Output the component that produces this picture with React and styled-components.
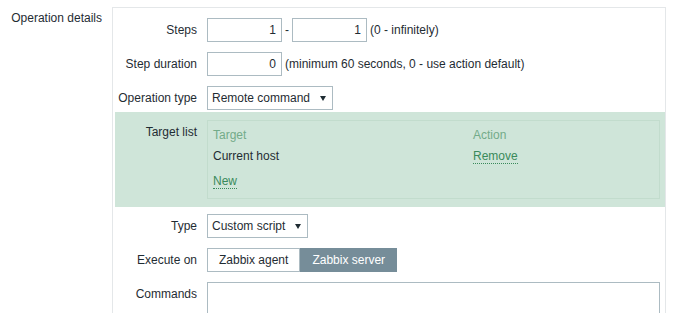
import React from "react";
import styled, { createGlobalStyle } from "styled-components";

const GlobalStyle = createGlobalStyle`
  html, body { margin: 0; padding: 0; overflow: hidden; background: #fff; }
  body {
    font-family: "Liberation Sans", Arial, sans-serif;
    font-size: 12px;
    line-height: 14px;
    color: #1f2c33;
  }
  * { box-sizing: border-box; }
`;

const Page = styled.div`
  display: flex;
  align-items: flex-start;
  padding: 7px 9px 0 0;
  height: 313px;
  overflow: hidden;
`;

const OuterLabel = styled.div`
  width: 112px;
  flex: none;
  padding: 4px 10px 0 0;
  text-align: right;
  white-space: nowrap;
`;

const Box = styled.div`
  flex: 1;
  align-self: stretch;
  border: 1px solid #e4e7e9;
  border-bottom: none;
  padding: 10px 0 0 2px;
  display: flex;
  flex-direction: column;
`;

const Row = styled.div`
  display: grid;
  grid-template-columns: 92px 1fr;
  margin-top: ${(p) => p.$mt ?? 10}px;
  padding: ${(p) => (p.$highlight ? "8px 5px 8px 0" : "0 5px 0 0")};
  background: ${(p) => (p.$highlight ? "#cfe5d9" : "transparent")};
`;

const Label = styled.div`
  padding: 5px 10px 0 0;
  text-align: right;
  white-space: nowrap;
`;

const Field = styled.div`
  display: flex;
  align-items: center;
  gap: 3px;
  white-space: nowrap;
`;

const NumInput = styled.div`
  width: 75px;
  height: 24px;
  border: 1px solid #acbbc2;
  background: #fff;
  display: flex;
  align-items: center;
  justify-content: flex-end;
  padding-right: 5px;
`;

const Select = styled.div`
  width: ${(p) => p.$w}px;
  height: 24px;
  border: 1px solid #acbbc2;
  background: #fff;
  display: flex;
  align-items: center;
  justify-content: space-between;
  padding: 0 6px 0 4px;
`;

const Arrow = styled.span`
  width: 0;
  height: 0;
  border-left: 3px solid transparent;
  border-right: 3px solid transparent;
  border-top: 5px solid #1f2c33;
`;

const TargetBox = styled.div`
  border: 1px solid #c2dccd;
  padding: 7px 5px 10px 5px;
`;

const TableRow = styled.div`
  display: grid;
  grid-template-columns: 260px 1fr;
  padding-bottom: 7px;
  color: ${(p) => (p.$head ? "#73ab89" : "#1f2c33")};
`;

const Link = styled.span`
  color: #3a8a5b;
  border-bottom: 1px dotted #3a8a5b;
  cursor: pointer;
`;

const NewLine = styled.div`
  margin-top: 4px;
`;

const Segmented = styled.div`
  display: flex;
  height: 24px;
`;

const SegButton = styled.div`
  display: flex;
  align-items: center;
  padding: 0 11px;
  border: 1px solid ${(p) => (p.$active ? "#768d99" : "#acbbc2")};
  background: ${(p) => (p.$active ? "#768d99" : "#fff")};
  color: ${(p) => (p.$active ? "#fff" : "#1f2c33")};
`;

const TextArea = styled.div`
  width: 100%;
  height: 40px;
  border: 1px solid #acbbc2;
  border-bottom: none;
  background: #fff;
`;

export default function App() {
  return (
    <>
      <GlobalStyle />
      <Page>
        <OuterLabel>Operation details</OuterLabel>
        <Box>
          <Row $mt={0}>
            <Label>Steps</Label>
            <Field>
              <NumInput>1</NumInput>
              <span>-</span>
              <NumInput>1</NumInput>
              <span>(0 - infinitely)</span>
            </Field>
          </Row>
          <Row>
            <Label>Step duration</Label>
            <Field>
              <NumInput>0</NumInput>
              <span>(minimum 60 seconds, 0 - use action default)</span>
            </Field>
          </Row>
          <Row>
            <Label>Operation type</Label>
            <Field>
              <Select $w={126}>
                <span>Remote command</span>
                <Arrow />
              </Select>
            </Field>
          </Row>
          <Row $mt={2} $highlight>
            <Label>Target list</Label>
            <TargetBox>
              <TableRow $head>
                <span>Target</span>
                <span>Action</span>
              </TableRow>
              <TableRow>
                <span>Current host</span>
                <span>
                  <Link>Remove</Link>
                </span>
              </TableRow>
              <NewLine>
                <Link>New</Link>
              </NewLine>
            </TargetBox>
          </Row>
          <Row $mt={7}>
            <Label>Type</Label>
            <Field>
              <Select $w={101}>
                <span>Custom script</span>
                <Arrow />
              </Select>
            </Field>
          </Row>
          <Row>
            <Label>Execute on</Label>
            <Field>
              <Segmented>
                <SegButton>Zabbix agent</SegButton>
                <SegButton $active>Zabbix server</SegButton>
              </Segmented>
            </Field>
          </Row>
          <Row>
            <Label>Commands</Label>
            <TextArea />
          </Row>
        </Box>
      </Page>
    </>
  );
}
